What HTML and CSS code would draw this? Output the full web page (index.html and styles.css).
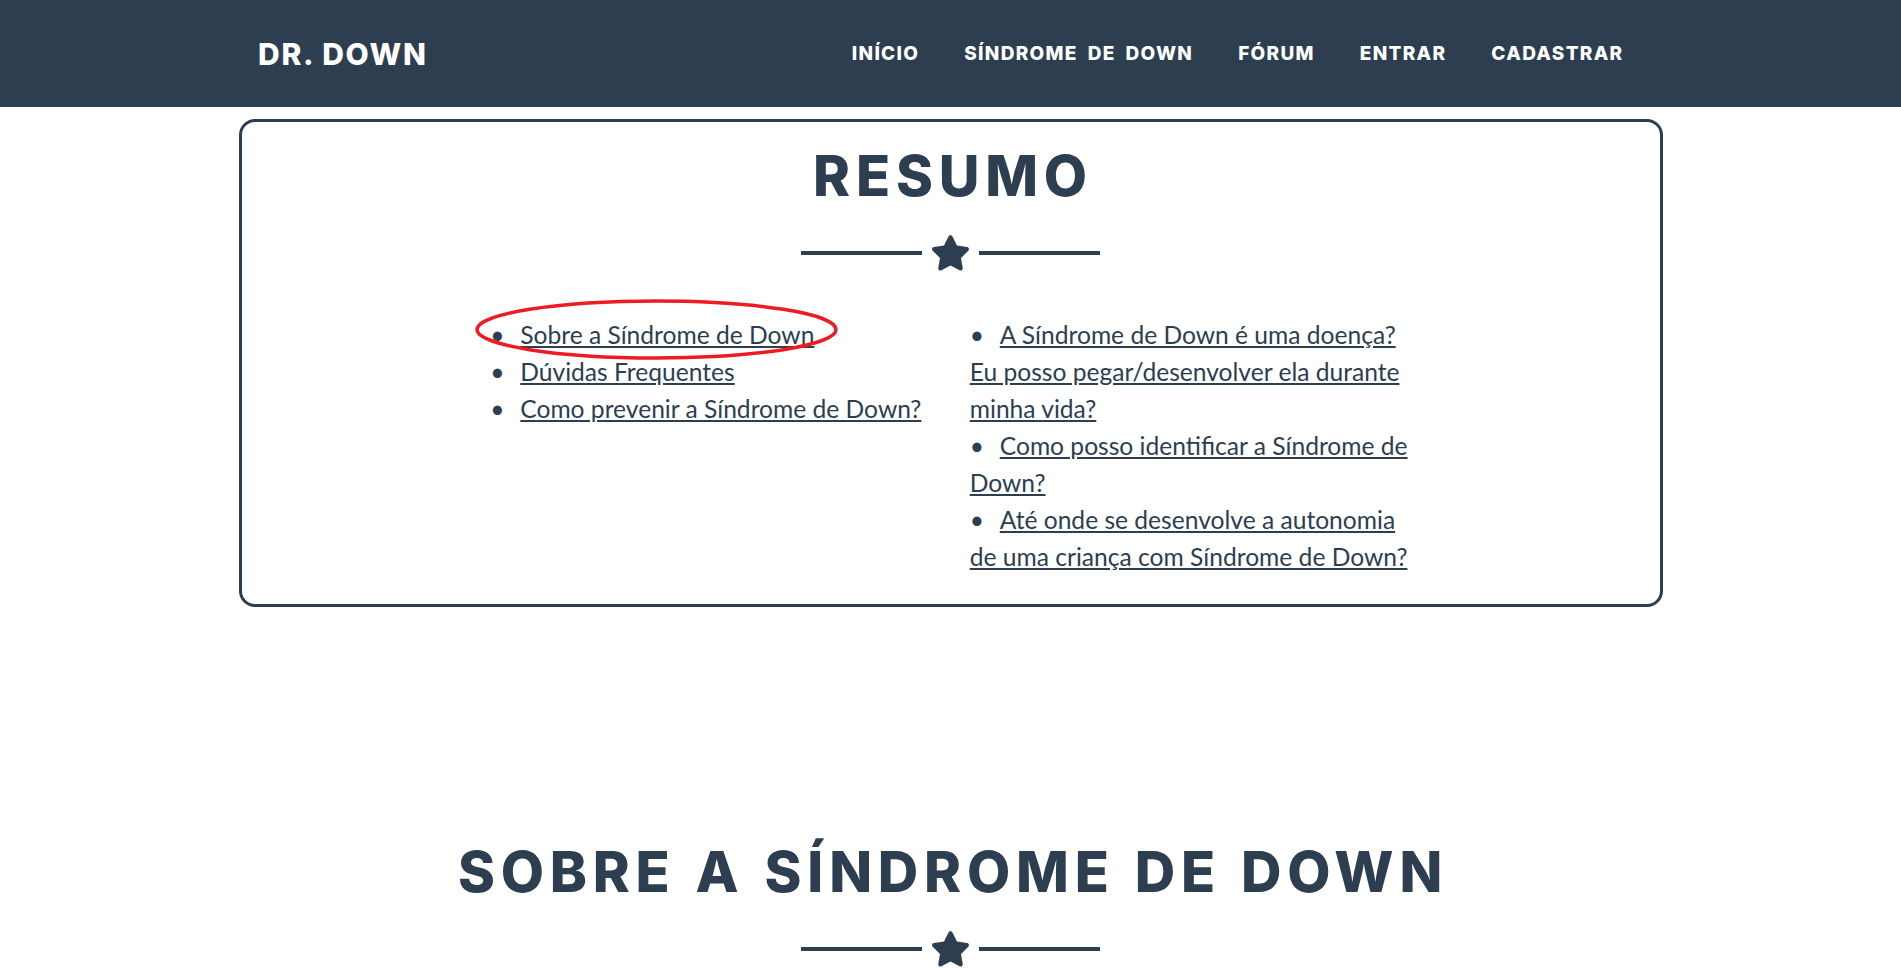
FILE: index.html
```html
<!DOCTYPE html>
<html lang="pt-BR">
<head>
<meta charset="utf-8">
<title>Dr. Down</title>
<link rel="stylesheet" href="styles.css">
</head>
<body>
<nav class="navbar">
  <div class="nav-inner">
    <a class="brand" href="#">DR. DOWN</a>
    <ul class="nav-links">
      <li><a href="#">INÍCIO</a></li>
      <li><a href="#">SÍNDROME DE DOWN</a></li>
      <li><a href="#">FÓRUM</a></li>
      <li><a href="#">ENTRAR</a></li>
      <li><a href="#">CADASTRAR</a></li>
    </ul>
  </div>
</nav>
<main>
  <section class="resumo-card">
    <h2 class="section-heading">RESUMO</h2>
    <div class="divider">
      <span class="divider-line"></span>
      <svg class="divider-star" viewBox="20 5 536 505"><path d="M259.3 17.8L194 150.2 47.9 171.5c-26.2 3.8-36.7 36.1-17.7 54.6l105.7 103-25 145.5c-4.5 26.3 23.2 46 46.4 33.7L288 439.6l130.7 68.7c23.2 12.2 50.9-7.4 46.4-33.7l-25-145.5 105.7-103c19-18.5 8.5-50.8-17.7-54.6L382 150.2 316.7 17.8c-11.7-23.6-45.6-23.9-57.4 0z"/></svg>
      <span class="divider-line"></span>
    </div>
    <div class="resumo-cols">
      <ul class="topic-list">
        <li class="marked"><a href="#">Sobre a Síndrome de Down</a><svg class="annotation" viewBox="0 0 363 61"><ellipse cx="181.5" cy="30.5" rx="179.5" ry="28.5"/></svg></li>
        <li><a href="#">Dúvidas Frequentes</a></li>
        <li><a href="#">Como prevenir a Síndrome de Down?</a></li>
      </ul>
      <ul class="topic-list">
        <li><a href="#">A Síndrome de Down é uma doença? Eu posso pegar/desenvolver ela durante minha vida?</a></li>
        <li><a href="#">Como posso identificar a Síndrome de Down?</a></li>
        <li><a href="#">Até onde se desenvolve a autonomia de uma criança com Síndrome de Down?</a></li>
      </ul>
    </div>
  </section>
  <section class="sobre">
    <h2 class="section-heading">SOBRE A SÍNDROME DE DOWN</h2>
    <div class="divider">
      <span class="divider-line"></span>
      <svg class="divider-star" viewBox="20 5 536 505"><path d="M259.3 17.8L194 150.2 47.9 171.5c-26.2 3.8-36.7 36.1-17.7 54.6l105.7 103-25 145.5c-4.5 26.3 23.2 46 46.4 33.7L288 439.6l130.7 68.7c23.2 12.2 50.9-7.4 46.4-33.7l-25-145.5 105.7-103c19-18.5 8.5-50.8-17.7-54.6L382 150.2 316.7 17.8c-11.7-23.6-45.6-23.9-57.4 0z"/></svg>
      <span class="divider-line"></span>
    </div>
  </section>
</main>
</body>
</html>
```

FILE: styles.css
```css
body {
  margin: 0;
  font-family: Lato, "Open Sans", sans-serif;
  color: #2c3e50;
  background: #fff;
}

.navbar {
  background: #2c3e50;
  height: 107px;
}

.nav-inner {
  width: 1385px;
  height: 100%;
  margin: 0 auto;
  display: flex;
  align-items: center;
  justify-content: space-between;
}

.brand {
  font-family: Inter, sans-serif;
  font-weight: 800;
  font-size: 30px;
  letter-spacing: 1.7px;
  color: #fff;
  text-decoration: none;
}

.nav-links {
  display: flex;
  list-style: none;
  margin: 0 -3px 0 0;
  padding: 0;
}

.nav-links a {
  display: block;
  padding: 0 22.5px;
  font-family: Inter, sans-serif;
  font-weight: 800;
  font-size: 19px;
  letter-spacing: 1.3px;
  word-spacing: 4.5px;
  color: #fff;
  text-decoration: none;
}

.resumo-card {
  box-sizing: border-box;
  width: 1424px;
  margin: 12px auto 0;
  border: 3px solid #2c3e50;
  border-radius: 16px;
  padding: 21px 0 29px;
}

.section-heading {
  margin: 0;
  text-align: center;
  text-indent: 5px;
  font-family: Inter, sans-serif;
  font-weight: 800;
  font-size: 56px;
  line-height: 1.2;
  letter-spacing: 5.8px;
  word-spacing: 2px;
  color: #2c3e50;
}

.divider {
  display: flex;
  justify-content: center;
  align-items: center;
  gap: 10px;
  margin-top: 25px;
}

.divider-line {
  width: 121px;
  height: 4px;
  background: #2c3e50;
}

.divider-star {
  width: 37px;
  height: 36px;
  fill: #2c3e50;
}

.resumo-cols {
  display: grid;
  grid-template-columns: 444px 444px;
  column-gap: 35.5px;
  justify-content: center;
  padding-left: 3px;
  margin-top: 45px;
}

.topic-list {
  list-style: none;
  margin: 0;
  padding: 0;
  font-size: 24.6px;
  line-height: 37px;
}

.topic-list li::before {
  content: "•";
  display: inline-block;
  width: 30px;
}

.topic-list a {
  color: #2c3e50;
  text-decoration: underline;
}

.marked {
  position: relative;
}

.annotation {
  position: absolute;
  left: -15px;
  top: -17px;
  width: 363px;
  height: 61px;
  overflow: visible;
  pointer-events: none;
  fill: none;
  stroke: #ed1c24;
  stroke-width: 3.5;
}

.sobre {
  padding-top: 232px;
}
```
